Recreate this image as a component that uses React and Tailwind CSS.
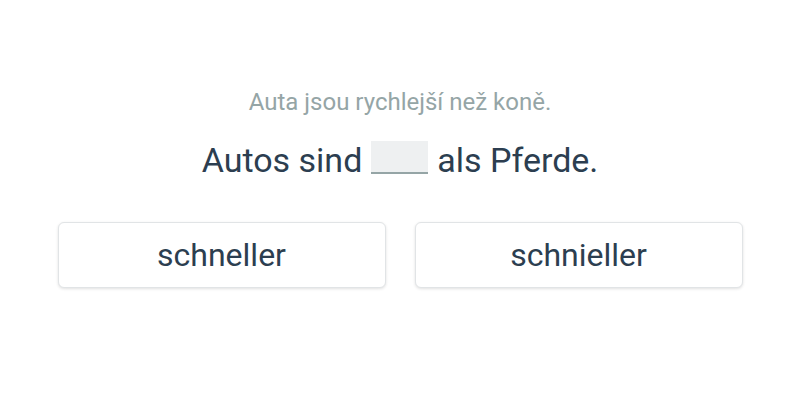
export default function App() {
  return (
    <div className="w-[800px] h-[400px] bg-white flex flex-col items-center font-['Roboto',sans-serif]">
      <p className="mt-[86px] text-[24px] leading-[32px] text-[#95a5a6]">Auta jsou rychlejší než koně.</p>
      <p className="mt-[22px] text-[34px] leading-[40px] text-[#2c3e50] flex items-center">
        <span>Autos sind</span>
        <span className="mx-[9px] mb-[5px] w-[57px] h-[33px] bg-[#eef0f1] border-b-2 border-[#95a5a6]" />
        <span>als Pferde.</span>
      </p>
      <div className="mt-[42px] flex gap-[29px]">
        {['schneller', 'schnieller'].map((w) => (
          <button
            key={w}
            className="w-[328px] h-[66px] rounded-[6px] bg-white border border-[#e1e4e6] shadow-[0_1px_3px_rgba(0,0,0,0.12)] text-[32px] text-[#2c3e50]"
          >
            {w}
          </button>
        ))}
      </div>
    </div>
  );
}
